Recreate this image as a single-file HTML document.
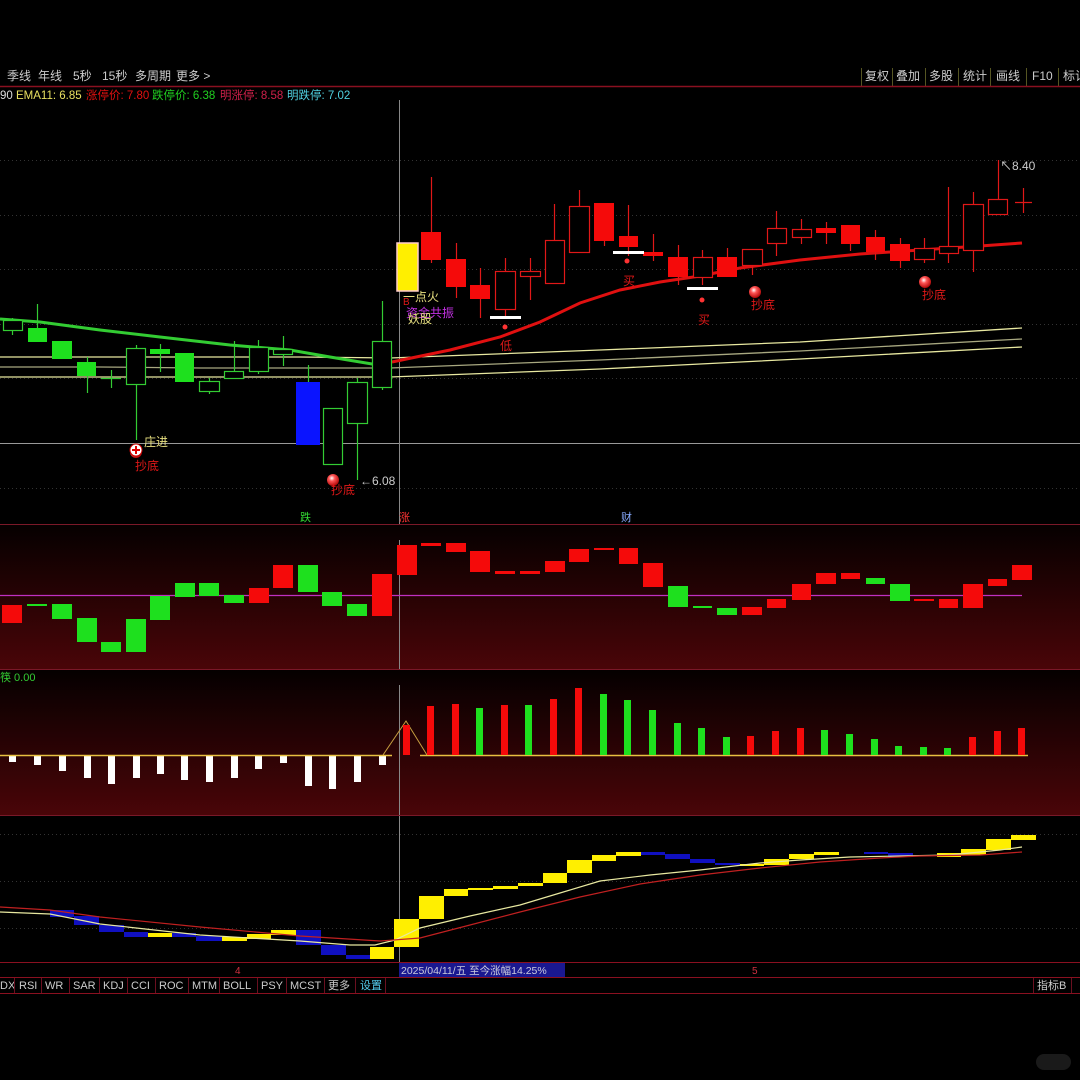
<!DOCTYPE html>
<html><head><meta charset="utf-8"><style>
html,body{margin:0;padding:0;background:#000;width:1080px;height:1080px;overflow:hidden}
svg{display:block}
text{font-family:"Liberation Sans","Noto Sans CJK SC",sans-serif}
</style></head><body>
<svg width="1080" height="1080" viewBox="0 0 1080 1080" xmlns="http://www.w3.org/2000/svg">
<defs>
<linearGradient id="g2" x1="0" y1="0" x2="0" y2="1"><stop offset="0" stop-color="#050000"/><stop offset="1" stop-color="#4a0508"/></linearGradient>
<radialGradient id="ball" cx="0.4" cy="0.35" r="0.7"><stop offset="0" stop-color="#fff"/><stop offset="0.35" stop-color="#f55"/><stop offset="1" stop-color="#a00"/></radialGradient>
</defs>
<rect width="1080" height="1080" fill="#000"/>

<!-- top toolbar -->
<g fill="#ccc" font-size="12">
<text x="7" y="80">季线</text><text x="38" y="80">年线</text><text x="73" y="80">5秒</text><text x="102" y="80">15秒</text><text x="135" y="80">多周期</text><text x="176" y="80">更多 &gt;</text>
<text x="865" y="80">复权</text><text x="896" y="80">叠加</text><text x="929" y="80">多股</text><text x="963" y="80">统计</text><text x="996" y="80">画线</text><text x="1032" y="80">F10</text><text x="1063" y="80">标记</text>
</g>
<g stroke="#552" stroke-width="1">
<line x1="861.5" y1="68" x2="861.5" y2="86"/><line x1="892.5" y1="68" x2="892.5" y2="86"/><line x1="925.5" y1="68" x2="925.5" y2="86"/><line x1="958.5" y1="68" x2="958.5" y2="86"/><line x1="990.5" y1="68" x2="990.5" y2="86"/><line x1="1026.5" y1="68" x2="1026.5" y2="86"/><line x1="1058.5" y1="68" x2="1058.5" y2="86"/>
</g>
<line x1="0" y1="86.5" x2="1080" y2="86.5" stroke="#8a1020" stroke-width="1.5"/>
<g font-size="11.5">
<text x="0" y="99" fill="#ddd">90</text><text x="16" y="99" fill="#e8e060">EMA11: 6.85</text>
<text x="86" y="99" fill="#e01010">涨停价: 7.80</text>
<text x="152" y="99" fill="#20d020">跌停价: 6.38</text>
<text x="220" y="99" fill="#d0204a">明涨停: 8.58</text>
<text x="287" y="99" fill="#50d0e0">明跌停: 7.02</text>
</g>

<!-- grid dotted -->
<g stroke="#333" stroke-dasharray="1 3" stroke-width="1">
<line x1="0" y1="160.5" x2="1080" y2="160.5"/><line x1="0" y1="215.5" x2="1080" y2="215.5"/><line x1="0" y1="269.5" x2="1080" y2="269.5"/><line x1="0" y1="324.5" x2="1080" y2="324.5"/><line x1="0" y1="378.5" x2="1080" y2="378.5"/><line x1="0" y1="488.5" x2="1080" y2="488.5"/>
</g>
<line x1="0" y1="443.5" x2="1080" y2="443.5" stroke="#999" stroke-width="1"/>
<line x1="399.5" y1="100" x2="399.5" y2="962" stroke="#888" stroke-width="1"/>

<!-- MA lines -->
<polyline fill="none" stroke="#e8e8a0" stroke-width="1.3" points="0,357 100,357 200,357 300,357 390,358 600,350 800,342 1022,328"/>
<polyline fill="none" stroke="#a8a880" stroke-width="1.3" points="0,367 100,367 200,368 300,368 390,368 600,360 800,351 1022,339"/>
<polyline fill="none" stroke="#e8e8a0" stroke-width="1.3" points="0,377 100,377 200,377 300,377 390,377 600,369 800,359 1022,347"/>
<polyline fill="none" stroke="#3c3" stroke-width="3" points="0,319 40,322 100,330 160,337 230,345 290,350 330,357 372,364 390,362"/>
<polyline fill="none" stroke="#e01010" stroke-width="3" points="392,362 450,350 500,337 540,322 580,303 620,290 660,282 700,276 740,268 800,260 860,254 920,250 980,246 1022,243"/>

<!-- green candles -->
<g stroke="#3c3" stroke-width="1.2" fill="#000">
<line x1="12.5" y1="318" x2="12.5" y2="335"/><rect x="3.5" y="320.5" width="19" height="10"/>
<line x1="37.5" y1="304" x2="37.5" y2="342"/>
<line x1="87.5" y1="357" x2="87.5" y2="393"/>
<line x1="101" y1="378.5" x2="121" y2="378.5"/><line x1="111.5" y1="370" x2="111.5" y2="388"/>
<line x1="136.5" y1="345" x2="136.5" y2="440"/><rect x="126.5" y="348.5" width="19" height="36"/>
<line x1="160.5" y1="344" x2="160.5" y2="372"/>
<line x1="209.5" y1="378" x2="209.5" y2="394"/><rect x="199.5" y="381.5" width="20" height="10"/>
<line x1="234.5" y1="341" x2="234.5" y2="378"/><rect x="224.5" y="371.5" width="19" height="7"/>
<line x1="258.5" y1="340" x2="258.5" y2="374"/><rect x="249.5" y="347.5" width="19" height="24"/>
<line x1="283.5" y1="336" x2="283.5" y2="366"/><rect x="273.5" y="349.5" width="19" height="5"/>
<line x1="308.5" y1="365" x2="308.5" y2="382"/>
<rect x="323.5" y="408.5" width="19" height="56"/>
<line x1="357.5" y1="378" x2="357.5" y2="480"/><rect x="347.5" y="382.5" width="20" height="41"/>
<line x1="382.5" y1="301" x2="382.5" y2="390"/><rect x="372.5" y="341.5" width="19" height="46"/>
</g>
<g fill="#1ee01e">
<rect x="28" y="328" width="19" height="14"/><rect x="52" y="341" width="20" height="18"/><rect x="77" y="362" width="19" height="14"/>
<rect x="150" y="349" width="20" height="5"/><rect x="175" y="353" width="19" height="29"/>
</g>
<rect x="296" y="382" width="24" height="63" fill="#0a14ff"/>
<rect x="397" y="243" width="21" height="48" fill="#ffef00" stroke="#fcc" stroke-width="1.5"/>

<!-- red candles -->
<g stroke="#e01818" stroke-width="1.2" fill="#000">
<line x1="431.5" y1="177" x2="431.5" y2="263"/><line x1="456.5" y1="243" x2="456.5" y2="298"/><line x1="480.5" y1="268" x2="480.5" y2="318"/>
<line x1="505.5" y1="258" x2="505.5" y2="316"/><rect x="495.5" y="271.5" width="20" height="38"/>
<line x1="530.5" y1="258" x2="530.5" y2="300"/><rect x="520.5" y="271.5" width="20" height="5"/>
<line x1="554.5" y1="204" x2="554.5" y2="283"/><rect x="545.5" y="240.5" width="19" height="43"/>
<line x1="579.5" y1="190" x2="579.5" y2="252"/><rect x="569.5" y="206.5" width="20" height="46"/>
<line x1="604.5" y1="203" x2="604.5" y2="246"/><line x1="628.5" y1="205" x2="628.5" y2="256"/><line x1="653.5" y1="234" x2="653.5" y2="261"/>
<line x1="678.5" y1="245" x2="678.5" y2="285"/>
<line x1="702.5" y1="250" x2="702.5" y2="285"/><rect x="693.5" y="257.5" width="19" height="20"/>
<line x1="727.5" y1="248" x2="727.5" y2="277"/>
<line x1="752.5" y1="249" x2="752.5" y2="275"/><rect x="742.5" y="249.5" width="20" height="16"/>
<line x1="776.5" y1="211" x2="776.5" y2="256"/><rect x="767.5" y="228.5" width="19" height="15"/>
<line x1="801.5" y1="219" x2="801.5" y2="244"/><rect x="792.5" y="229.5" width="19" height="8"/>
<line x1="826.5" y1="222" x2="826.5" y2="244"/><line x1="850.5" y1="225" x2="850.5" y2="251"/><line x1="875.5" y1="230" x2="875.5" y2="260"/><line x1="900.5" y1="238" x2="900.5" y2="268"/>
<line x1="924.5" y1="238" x2="924.5" y2="263"/><rect x="914.5" y="248.5" width="20" height="11"/>
<line x1="948.5" y1="187" x2="948.5" y2="263"/><rect x="939.5" y="246.5" width="19" height="7"/>
<line x1="973.5" y1="192" x2="973.5" y2="272"/><rect x="963.5" y="204.5" width="20" height="46"/>
<line x1="998.5" y1="160" x2="998.5" y2="214"/><rect x="988.5" y="199.5" width="19" height="15"/>
<line x1="1015" y1="202.5" x2="1032" y2="202.5"/><line x1="1023.5" y1="188" x2="1023.5" y2="213"/>
</g>
<g fill="#f50a0a">
<rect x="421" y="232" width="20" height="28"/><rect x="446" y="259" width="20" height="28"/><rect x="470" y="285" width="20" height="14"/>
<rect x="594" y="203" width="20" height="38"/><rect x="619" y="236" width="19" height="11"/><rect x="643" y="252" width="20" height="4"/>
<rect x="668" y="257" width="20" height="20"/><rect x="717" y="257" width="20" height="20"/>
<rect x="816" y="228" width="20" height="5"/><rect x="841" y="225" width="19" height="19"/><rect x="866" y="237" width="19" height="15"/><rect x="890" y="244" width="20" height="17"/>
</g>
<!-- white bars -->
<g fill="#fff"><rect x="490" y="316" width="31" height="3"/><rect x="613" y="251" width="31" height="3"/><rect x="687" y="287" width="31" height="3"/></g>

<!-- markers -->
<g font-size="12">
<text x="144" y="446" fill="#e8e080">庄进</text>
<circle cx="136" cy="452" r="6" fill="url(#ball)"/><circle cx="136" cy="450" r="6" fill="#fff" stroke="#c00"/><path d="M132 450h8M136 446v8" stroke="#d00" stroke-width="2"/>
<text x="135" y="470" fill="#e01818">抄底</text>
<circle cx="333" cy="480" r="6" fill="url(#ball)"/><text x="331" y="494" fill="#e01818">抄底</text>
<text x="360" y="485" fill="#ccc">←6.08</text>
<text x="1000" y="170" fill="#ccc">↖8.40</text>
<circle cx="755" cy="292" r="6" fill="url(#ball)"/><text x="751" y="309" fill="#e01818">抄底</text>
<circle cx="925" cy="282" r="6" fill="url(#ball)"/><text x="922" y="299" fill="#e01818">抄底</text>
<text x="403" y="301" fill="#e8e080">一点火</text>
<text x="403" y="305" fill="#e01818" font-size="10">B</text>
<text x="406" y="317" fill="#c030e0">资金共振</text>
<text x="408" y="323" fill="#e8e080">妖股</text>
<circle cx="505" cy="327" r="2.5" fill="#f33"/><text x="500" y="350" fill="#e01818">低</text>
<circle cx="627" cy="261" r="2.5" fill="#f33"/><text x="623" y="285" fill="#e01818">买</text>
<circle cx="702" cy="300" r="2.5" fill="#f33"/><text x="698" y="324" fill="#e01818">买</text>
</g>

<!-- panel 2 -->
<g font-size="11"><text x="300" y="521" fill="#3d3">跌</text><text x="399" y="521" fill="#f33">涨</text><text x="621" y="521" fill="#8af">财</text></g>
<rect x="0" y="524" width="1080" height="146" fill="url(#g2)"/>
<line x1="0" y1="524.5" x2="1080" y2="524.5" stroke="#7a1828"/>
<line x1="399.5" y1="540" x2="399.5" y2="670" stroke="#888"/>
<line x1="0" y1="595.5" x2="1022" y2="595.5" stroke="#c030c0" stroke-width="1.2"/>
<g fill="#1ee01e">
<rect x="27" y="604" width="20" height="2"/><rect x="52" y="604" width="20" height="15"/><rect x="77" y="618" width="20" height="24"/><rect x="101" y="642" width="20" height="10"/><rect x="126" y="619" width="20" height="33"/><rect x="150" y="596" width="20" height="24"/><rect x="175" y="583" width="20" height="14"/><rect x="199" y="583" width="20" height="13"/><rect x="224" y="595" width="20" height="8"/><rect x="298" y="565" width="20" height="27"/><rect x="322" y="592" width="20" height="14"/><rect x="347" y="604" width="20" height="12"/>
<rect x="668" y="586" width="20" height="21"/><rect x="693" y="606" width="19" height="2"/><rect x="717" y="608" width="20" height="7"/><rect x="866" y="578" width="19" height="6"/><rect x="890" y="584" width="20" height="17"/>
</g>
<g fill="#f50a0a">
<rect x="2" y="605" width="20" height="18"/><rect x="249" y="588" width="20" height="15"/><rect x="273" y="565" width="20" height="23"/><rect x="372" y="574" width="20" height="42"/>
<rect x="397" y="545" width="20" height="30"/><rect x="421" y="543" width="20" height="3"/><rect x="446" y="543" width="20" height="9"/><rect x="470" y="551" width="20" height="21"/><rect x="495" y="571" width="20" height="3"/><rect x="520" y="571" width="20" height="3"/><rect x="545" y="561" width="20" height="11"/><rect x="569" y="549" width="20" height="13"/><rect x="594" y="548" width="20" height="2"/><rect x="619" y="548" width="19" height="16"/><rect x="643" y="563" width="20" height="24"/>
<rect x="742" y="607" width="20" height="8"/><rect x="767" y="599" width="19" height="9"/><rect x="792" y="584" width="19" height="16"/><rect x="816" y="573" width="20" height="11"/><rect x="841" y="573" width="19" height="6"/><rect x="914" y="599" width="20" height="2"/><rect x="939" y="599" width="19" height="9"/><rect x="963" y="584" width="20" height="24"/><rect x="988" y="579" width="19" height="7"/><rect x="1012" y="565" width="20" height="15"/>
</g>

<!-- panel 3 -->
<rect x="0" y="670" width="1080" height="146" fill="url(#g2)"/>
<line x1="0" y1="669.5" x2="1080" y2="669.5" stroke="#7a1828"/>
<text x="0" y="681" fill="#3c3" font-size="11">筷 0.00</text>
<line x1="399.5" y1="685" x2="399.5" y2="816" stroke="#888"/>
<g fill="#fff">
<rect x="9" y="755" width="7" height="7"/><rect x="34" y="755" width="7" height="10"/><rect x="59" y="755" width="7" height="16"/><rect x="84" y="755" width="7" height="23"/><rect x="108" y="755" width="7" height="29"/><rect x="133" y="755" width="7" height="23"/><rect x="157" y="755" width="7" height="19"/><rect x="181" y="755" width="7" height="25"/><rect x="206" y="755" width="7" height="27"/><rect x="231" y="755" width="7" height="23"/><rect x="255" y="755" width="7" height="14"/><rect x="280" y="755" width="7" height="8"/><rect x="305" y="755" width="7" height="31"/><rect x="329" y="755" width="7" height="34"/><rect x="354" y="755" width="7" height="27"/><rect x="379" y="755" width="7" height="10"/>
</g>
<line x1="0" y1="755.5" x2="392" y2="755.5" stroke="#e8c040" stroke-width="1.5"/>
<line x1="420" y1="755.5" x2="1028" y2="755.5" stroke="#e8c040" stroke-width="1.5"/>
<polyline points="383,755 406,721 427,755" fill="none" stroke="#c8a040" stroke-width="1"/>
<g fill="#f50a0a">
<rect x="403" y="725" width="7" height="30"/><rect x="427" y="706" width="7" height="49"/><rect x="452" y="704" width="7" height="51"/><rect x="501" y="705" width="7" height="50"/><rect x="550" y="699" width="7" height="56"/><rect x="575" y="688" width="7" height="67"/><rect x="747" y="736" width="7" height="19"/><rect x="772" y="731" width="7" height="24"/><rect x="797" y="728" width="7" height="27"/><rect x="969" y="737" width="7" height="18"/><rect x="994" y="731" width="7" height="24"/><rect x="1018" y="728" width="7" height="27"/>
</g>
<g fill="#1ee01e">
<rect x="476" y="708" width="7" height="47"/><rect x="525" y="705" width="7" height="50"/><rect x="600" y="694" width="7" height="61"/><rect x="624" y="700" width="7" height="55"/><rect x="649" y="710" width="7" height="45"/><rect x="674" y="723" width="7" height="32"/><rect x="698" y="728" width="7" height="27"/><rect x="723" y="737" width="7" height="18"/><rect x="821" y="730" width="7" height="25"/><rect x="846" y="734" width="7" height="21"/><rect x="871" y="739" width="7" height="16"/><rect x="895" y="746" width="7" height="9"/><rect x="920" y="747" width="7" height="8"/><rect x="944" y="748" width="7" height="7"/>
</g>

<!-- panel 4 -->
<line x1="0" y1="815.5" x2="1080" y2="815.5" stroke="#7a1828"/>
<g stroke="#333" stroke-dasharray="1 3"><line x1="0" y1="834.5" x2="1080" y2="834.5"/><line x1="0" y1="881.5" x2="1080" y2="881.5"/><line x1="0" y1="928.5" x2="1080" y2="928.5"/></g>
<line x1="399.5" y1="830" x2="399.5" y2="962" stroke="#888"/>
<g fill="#1010c0">
<rect x="50" y="910" width="24" height="7"/><rect x="74" y="916" width="25" height="9"/><rect x="99" y="925" width="25" height="7"/><rect x="124" y="932" width="24" height="5"/><rect x="172" y="933" width="24" height="4"/><rect x="196" y="936" width="26" height="5"/><rect x="296" y="930" width="25" height="15"/><rect x="321" y="945" width="25" height="10"/><rect x="346" y="955" width="24" height="4"/>
<rect x="641" y="852" width="24" height="3"/><rect x="665" y="854" width="25" height="5"/><rect x="690" y="859" width="25" height="4"/><rect x="715" y="863" width="25" height="2"/><rect x="864" y="852" width="24" height="2"/><rect x="888" y="853" width="25" height="4"/>
</g>
<g fill="#ffef00">
<rect x="148" y="933" width="24" height="4"/><rect x="222" y="937" width="25" height="4"/><rect x="247" y="934" width="24" height="5"/><rect x="271" y="930" width="25" height="5"/>
<rect x="370" y="947" width="24" height="12"/><rect x="394" y="919" width="25" height="28"/><rect x="419" y="896" width="25" height="23"/><rect x="444" y="889" width="24" height="7"/><rect x="468" y="888" width="25" height="2"/><rect x="493" y="886" width="25" height="3"/><rect x="518" y="883" width="25" height="3"/><rect x="543" y="873" width="24" height="10"/><rect x="567" y="860" width="25" height="13"/><rect x="592" y="855" width="24" height="6"/><rect x="616" y="852" width="25" height="4"/>
<rect x="740" y="864" width="24" height="2"/><rect x="764" y="859" width="25" height="6"/><rect x="789" y="854" width="25" height="5"/><rect x="814" y="852" width="25" height="3"/>
<rect x="937" y="853" width="24" height="4"/><rect x="961" y="849" width="25" height="6"/><rect x="986" y="839" width="25" height="11"/><rect x="1011" y="835" width="25" height="5"/>
</g>
<polyline fill="none" stroke="#e8e8a0" stroke-width="1.2" points="0,912 50,914 100,924 200,935 300,941 350,945 375,945 395,940 420,928 470,916 520,905 560,893 600,881 650,875 700,870 760,863 800,860 850,857 900,856 950,855 1000,850 1022,847"/>
<polyline fill="none" stroke="#c02020" stroke-width="1.2" points="0,907 50,910 100,917 200,927 300,936 380,941 420,938 470,925 520,912 580,897 640,884 700,875 760,868 820,862 880,858 920,856 980,855 1022,852"/>

<!-- bottom axis -->
<line x1="0" y1="962.5" x2="1080" y2="962.5" stroke="#8a1020"/>
<text x="235" y="974" fill="#d03040" font-size="10">4</text>
<text x="752" y="974" fill="#d03040" font-size="10">5</text>
<rect x="399" y="963" width="166" height="14" fill="#1a1890"/>
<text x="401" y="974" fill="#ccd" font-size="10.5">2025/04/11/五  至今涨幅14.25%</text>
<line x1="0" y1="977.5" x2="1080" y2="977.5" stroke="#8a1020"/>
<g font-size="11" fill="#ccc">
<text x="0" y="989">DX</text><text x="19" y="989">RSI</text><text x="45" y="989">WR</text><text x="73" y="989">SAR</text><text x="103" y="989">KDJ</text><text x="131" y="989">CCI</text><text x="159" y="989">ROC</text><text x="192" y="989">MTM</text><text x="223" y="989">BOLL</text><text x="261" y="989">PSY</text><text x="290" y="989">MCST</text><text x="328" y="989">更多</text><text x="360" y="989" fill="#5ce">设置</text><text x="1037" y="989">指标B</text>
</g>
<g stroke="#6a1020">
<line x1="14.5" y1="978" x2="14.5" y2="993"/><line x1="41.5" y1="978" x2="41.5" y2="993"/><line x1="69.5" y1="978" x2="69.5" y2="993"/><line x1="99.5" y1="978" x2="99.5" y2="993"/><line x1="127.5" y1="978" x2="127.5" y2="993"/><line x1="155.5" y1="978" x2="155.5" y2="993"/><line x1="188.5" y1="978" x2="188.5" y2="993"/><line x1="219.5" y1="978" x2="219.5" y2="993"/><line x1="257.5" y1="978" x2="257.5" y2="993"/><line x1="286.5" y1="978" x2="286.5" y2="993"/><line x1="324.5" y1="978" x2="324.5" y2="993"/><line x1="355.5" y1="978" x2="355.5" y2="993"/><line x1="385.5" y1="978" x2="385.5" y2="993"/><line x1="1033.5" y1="978" x2="1033.5" y2="993"/><line x1="1071.5" y1="978" x2="1071.5" y2="993"/>
</g>
<line x1="0" y1="993.5" x2="1080" y2="993.5" stroke="#8a1020"/>
<rect x="1036" y="1054" width="35" height="16" rx="8" fill="#1a1a1a"/>
</svg>
</body></html>
